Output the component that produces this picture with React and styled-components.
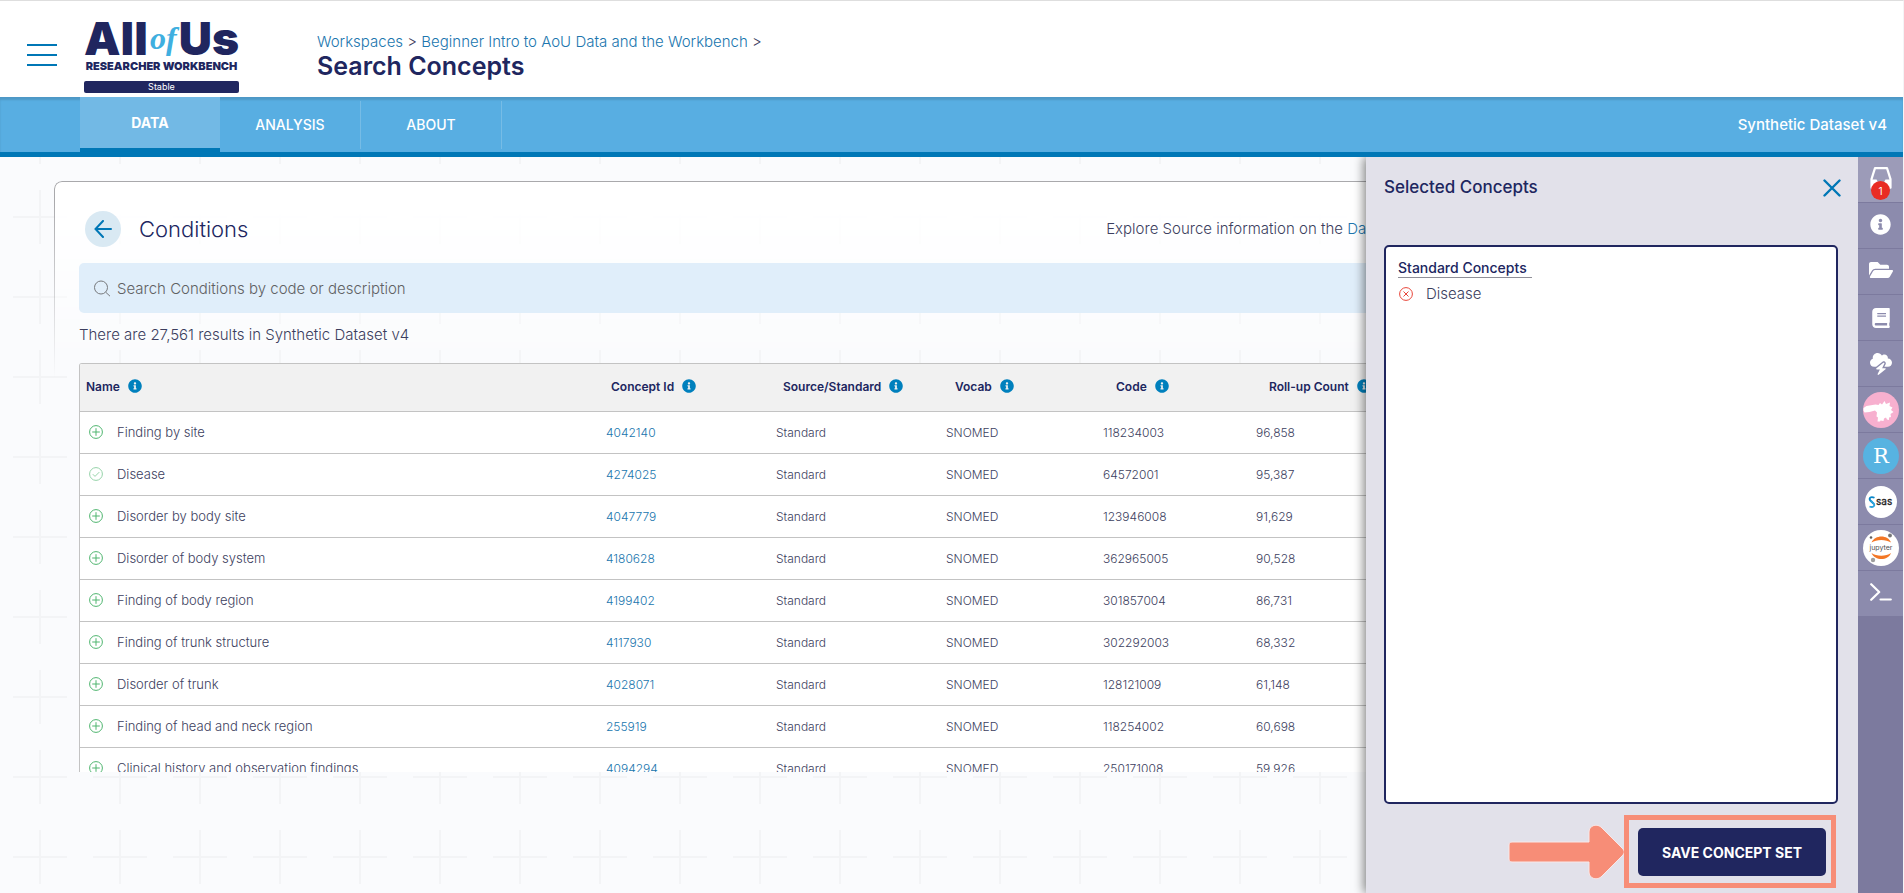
import React from 'react';
import styled, { createGlobalStyle } from 'styled-components';
import { FaBook, FaFolderOpen, FaInfoCircle } from 'react-icons/fa';
import { FaCloudBolt } from 'react-icons/fa6';

const colors = {
  primary: '#20265f',
  accent: '#0077b6',
  secondary: '#58aee2',
  link: '#2076ae',
  text: '#3c3e5e',
  border: '#c3c3c3',
  success: '#4fb56f',
  danger: '#e8463a',
  highlight: '#f78d77'
};

const plusTile = "url(\"data:image/svg+xml,%3Csvg xmlns='http://www.w3.org/2000/svg' width='80' height='80'%3E%3Cpath d='M40 13v54M13 40h54' stroke='%23f3f4f6' stroke-width='2'/%3E%3C/svg%3E\")";

const GlobalStyle = createGlobalStyle`
  * {
    box-sizing: border-box;
  }
  body {
    margin: 0;
    font-family: Inter, 'Open Sans', sans-serif;
    font-size: 15px;
    font-weight: 300;
    color: ${colors.text};
    background: #fff;
  }
  a {
    color: ${colors.link};
    text-decoration: none;
  }
  button {
    font-family: inherit;
    border: none;
    padding: 0;
    background: none;
    cursor: pointer;
  }
`;

const Page = styled.div`
  display: flex;
  flex-direction: column;
  height: 100vh;
  border-top: 1px solid #dedede;
  border-right: 1px solid #f4f4f6;
  overflow: hidden;
`;

const Header = styled.header`
  display: flex;
  flex: none;
  height: 96px;
  background: #fff;
`;

const MenuButton = styled.button`
  display: flex;
  flex-direction: column;
  justify-content: space-between;
  width: 30px;
  height: 22px;
  margin: 43px 27px 0;
`;

const MenuLine = styled.span`
  height: 2px;
  background: ${colors.accent};
`;

const Logo = styled.a`
  display: flex;
  flex-direction: column;
  width: 155px;
  margin-right: 78px;
  color: ${colors.primary};
  white-space: nowrap;
`;

const LogoTitle = styled.span`
  display: flex;
  justify-content: space-between;
  align-items: flex-start;
  height: 57px;
  padding-top: 17px;
  font-size: 46px;
  line-height: 40px;
  font-weight: 900;
`;

const LogoOf = styled.span`
  font-family: 'Liberation Serif', serif;
  font-size: 32px;
  font-style: italic;
  font-weight: 700;
  color: #3fafe0;
`;

const LogoSubtitle = styled.span`
  margin-top: 1px;
  font-size: 11px;
  line-height: 14px;
  font-weight: 900;
  text-align: center;
`;

const Badge = styled.span`
  height: 12px;
  margin-top: 8px;
  border-radius: 2px;
  background: ${colors.primary};
  color: #fff;
  font-size: 9px;
  line-height: 12px;
  font-weight: 400;
  text-align: center;
`;

const Breadcrumbs = styled.nav`
  padding-top: 32px;
  line-height: 18px;
`;

const PageTitle = styled.h1`
  margin: 0;
  font-size: 25px;
  line-height: 30px;
  font-weight: 600;
  color: ${colors.primary};
`;

const TabBar = styled.nav`
  display: flex;
  flex: none;
  align-items: center;
  height: 60px;
  padding: 0 16px 0 80px;
  border-bottom: 5px solid ${colors.accent};
  background: ${colors.secondary};
  box-shadow: inset 0 3px 2px rgba(0, 0, 0, 0.12);
  color: #fff;
  font-weight: 500;
`;

const Tab = styled.a`
  display: flex;
  align-items: center;
  justify-content: center;
  width: ${props => props.$active ? '140px' : '141px'};
  height: ${props => props.$active ? '55px' : '48px'};
  border-bottom: ${props => props.$active ? `4px solid ${colors.accent}` : 'none'};
  border-right: ${props => props.$active ? 'none' : '1px solid #76bce6'};
  background: ${props => props.$active ? '#72b9e5' : 'transparent'};
  font-size: 14px;
  font-weight: ${props => props.$active ? 700 : 500};
  color: #fff;
`;

const Dataset = styled.span`
  margin-left: auto;
`;

const Body = styled.div`
  position: relative;
  display: flex;
  flex: 1;
  min-height: 0;
  background: #fafbfd ${plusTile} 0 20px;
`;

const Main = styled.main`
  position: relative;
  display: flex;
  flex: 1;
  flex-direction: column;
  min-width: 0;
  margin: 24px 14px 121px 54px;
  padding: 0 24px 0 25px;

  &::before {
    content: '';
    position: absolute;
    inset: 0 0 auto;
    height: 196px;
    border: 1px solid #a9a9ac;
    border-bottom: none;
    border-radius: 8px 8px 0 0;
    background: #fff;
    mask-image: linear-gradient(#000 10%, transparent);
  }
`;

const TitleRow = styled.div`
  position: relative;
  display: grid;
  grid-template-columns: 59% 1fr;
  align-items: center;
  flex: none;
  height: 82px;
  padding-top: 13px;
  white-space: nowrap;
`;

const Domain = styled.div`
  display: flex;
  align-items: center;
  gap: 18px;
  padding-left: 6px;
`;

const BackButton = styled.button`
  display: flex;
  align-items: center;
  justify-content: center;
  width: 36px;
  height: 36px;
  border-radius: 50%;
  background: #d9e9f3;
`;

const DomainTitle = styled.h2`
  margin: 0;
  font-size: 22px;
  font-weight: 300;
  color: ${colors.primary};
`;

const SearchBar = styled.label`
  position: relative;
  display: flex;
  align-items: center;
  flex: none;
  gap: 4px;
  height: 50px;
  padding-left: 14px;
  border-radius: 5px;
  background: #e0eefa;
`;

const SearchInput = styled.input`
  flex: 1;
  border: none;
  outline: none;
  background: transparent;
  font: inherit;
  color: ${colors.text};

  &::placeholder {
    color: #5f6163;
    opacity: 1;
  }
`;

const Results = styled.div`
  position: relative;
  flex: none;
  height: 50px;
  padding-top: 13px;
  line-height: 18px;
`;

const TableFrame = styled.div`
  position: relative;
  flex: 1;
  min-height: 0;
  overflow: hidden;
  border: 1px solid ${colors.border};
  border-bottom: none;
  border-radius: 3px 3px 0 0;
`;

const Table = styled.table`
  width: 100%;
  border-collapse: collapse;
  table-layout: fixed;
  background: #fff;
  font-size: 12px;
  white-space: nowrap;
`;

const HeadCell = styled.th`
  height: 47px;
  padding: 0 0 2px ${props => props.$indent}px;
  border-bottom: 1px solid ${colors.border};
  background: #f1f1f1;
  color: ${colors.primary};
  font-weight: 600;
  text-align: left;
`;

const HeadLabel = styled.span`
  display: flex;
  align-items: center;
  gap: 8px;

  svg {
    flex: none;
    color: #0080bd;
  }
`;

const Cell = styled.td`
  height: 42px;
  padding: 0 0 0 7px;
  border-bottom: 1px solid ${colors.border};
`;

const NameCell = styled.div`
  display: flex;
  align-items: center;
  gap: 14px;
  padding-left: 2px;
  font-size: 13px;
`;

const IconButton = styled.button`
  display: flex;
  opacity: ${props => props.disabled ? 0.6 : 1};
`;

const Panel = styled.aside`
  position: absolute;
  top: 0;
  right: 45px;
  bottom: 0;
  display: flex;
  flex-direction: column;
  width: 492px;
  padding: 20px 17px 5px 18px;
  background: #e2e1ea;
  box-shadow: -2px 0 10px rgba(0, 0, 0, 0.5);
  clip-path: inset(0 0 0 -16px);
`;

const PanelHeader = styled.div`
  display: flex;
  justify-content: space-between;
  align-items: flex-start;
  height: 68px;
`;

const PanelTitle = styled.h3`
  margin: 0;
  font-size: 17px;
  line-height: 20px;
  font-weight: 500;
  color: ${colors.primary};
`;

const CloseButton = styled.button`
  display: flex;
  margin-top: 2px;
`;

const ConceptList = styled.section`
  flex: 1;
  min-height: 0;
  margin-right: 3px;
  padding: 12px;
  border: 2px solid ${colors.primary};
  border-radius: 5px;
  background: #fff;
`;

const ConceptGroup = styled.h4`
  width: 134px;
  margin: 0 0 7px;
  border-bottom: 1px solid #8f8f98;
  font-size: 14px;
  line-height: 18px;
  font-weight: 500;
  color: ${colors.primary};
  white-space: nowrap;
`;

const ConceptItem = styled.div`
  display: flex;
  align-items: center;
  gap: 13px;
  padding-left: 1px;
  line-height: 18px;
`;

const PanelFooter = styled.div`
  display: flex;
  align-items: center;
  justify-content: flex-end;
  padding: 11px 5px 0 0;
`;

const Highlight = styled.div`
  padding: 8px 5px 7px 9px;
  border: 5px solid ${colors.highlight};
`;

const SaveButton = styled.button`
  width: 188px;
  height: 48px;
  border-radius: 5px;
  background: ${colors.primary};
  color: #fff;
  font-size: 14px;
  font-weight: 700;
`;

const Sidebar = styled.nav`
  flex: none;
  width: 45px;
  background: #7c7a9e;
`;

const SideItem = styled.button`
  position: relative;
  display: flex;
  align-items: center;
  justify-content: center;
  width: 100%;
  height: 46px;
  padding-bottom: ${props => props.$brand ? 0 : 3}px;
  border-bottom: 1px solid #7c7a9e;
  background: ${props => props.$active ? '#9c9bb8' : '#8c8bad'};
  color: #fff;
`;

const Count = styled.span`
  position: absolute;
  top: 24px;
  left: 13px;
  width: 19px;
  height: 19px;
  border-radius: 50%;
  background: #e92c23;
  font-size: 10px;
  line-height: 20px;
`;

const CircleIcon = ({ kind, color }) => (
  <svg width="14" height="14" viewBox="0 0 14 14" fill="none" stroke={color}>
    <circle cx="7" cy="7" r="6.4" />
    {kind === 'plus' && <path d="M7 3.2v7.6M3.2 7h7.6" />}
    {kind === 'check' && <path d="M3.8 7.2l2.2 2.2 4.3-4.3" />}
    {kind === 'cross' && <path d="M4.5 4.5l5 5M9.5 4.5l-5 5" />}
  </svg>
);

const BackArrow = () => (
  <svg width="18" height="18" viewBox="0 0 18 18" fill="none" stroke={colors.accent} strokeWidth="2" strokeLinecap="round">
    <path d="M17 9H1.5M9 1L1.5 9 9 17" />
  </svg>
);

const SearchIcon = () => (
  <svg width="18" height="18" viewBox="0 0 18 18" fill="none" stroke="#77797c">
    <circle cx="8" cy="8.5" r="6.5" />
    <path d="M12.7 13.2l4.3 4" />
  </svg>
);

const CloseIcon = () => (
  <svg width="18" height="18" viewBox="0 0 18 18" stroke={colors.accent} strokeWidth="2.4" strokeLinecap="round">
    <path d="M1.500 1.500l15 15M16.500 1.500l-15 15" />
  </svg>
);

const TrayIcon = () => (
  <svg width="22" height="22" viewBox="0 0 22 22" fill="none" stroke="#fff" strokeWidth="2.2" strokeLinejoin="round">
    <path d="M5 1.200h12l3.500 11v8.500h-19v-8.500z" />
    <path d="M1.500 12.500h5l2 3.500h5l2-3.500h5v8h-19z" fill="#fff" stroke="none" />
  </svg>
);

const PigIcon = () => (
  <svg width="36" height="36" viewBox="0 0 36 36">
    <circle cx="18" cy="18" r="18" fill="#f7b0cf" />
    <path
      d="M.5 16l3-2 9-1.500 3 .5 1.500-2 2 1.500 2.500-3.500 1.500 3 4-1.500-.5 3.500 3 1.500-1.500 2.500 2.500 2-3 2 .5 3-2 .5 0 2.500-2-.5-1-2-2 1-.5 2.500-3-.5-.5 1-2.500 0 .5-4-1.500-1 .5-4-2-2-5.500 1.500-5 .5-1-2z"
      fill="#fff"
    />
  </svg>
);

const RIcon = () => (
  <svg width="36" height="36" viewBox="0 0 36 36">
    <circle cx="18" cy="18" r="18" fill="#57b3e1" />
    <text x="18" y="25" textAnchor="middle" fill="#fff" fontFamily="'DejaVu Serif', serif" fontSize="21">R</text>
  </svg>
);

const SasIcon = () => (
  <svg width="32" height="32" viewBox="0 0 32 32">
    <circle cx="16" cy="16" r="16" fill="#fff" />
    <path d="M9.500 11.800c-4-2-6 .8-4 3l3.500 3.200" fill="none" stroke="#0a86c8" strokeWidth="1.800" />
    <path d="M4.500 20.500c3.500 1.500 6-.8 4.200-3l-3-3" fill="none" stroke="#2ba3dc" strokeWidth="1.800" />
    <text x="11" y="19" fill="#222" stroke="#222" strokeWidth="0.3" fontFamily="Inter, sans-serif" fontSize="10">sas</text>
  </svg>
);

const JupyterIcon = () => (
  <svg width="36" height="36" viewBox="0 0 36 36">
    <circle cx="18" cy="18" r="18" fill="#fff" />
    <path d="M8.500 12.500C12 4.500 25 4.500 28 12.500 23 9 13.500 9 8.500 12.500zM8.500 23C12 31 25 31 28 23 23 26.500 13.500 26.500 8.500 23z" fill="#f37726" />
    <circle cx="8" cy="7.500" r="1.300" fill="#616161" />
    <circle cx="27" cy="5.500" r="1.900" fill="#767677" />
    <circle cx="10" cy="30" r="2.200" fill="#9e9e9e" />
    <text x="18" y="19.500" textAnchor="middle" fill="#4e4e4e" fontFamily="Inter, sans-serif" fontSize="7">jupyter</text>
  </svg>
);

const TerminalIcon = () => (
  <svg width="22" height="18" viewBox="0 0 22 18" fill="none" stroke="#fff" strokeWidth="2.2" strokeLinecap="round" strokeLinejoin="round">
    <path d="M1.200 1.200l8 7.800-8 7.800M10.500 16.500h10.300" />
  </svg>
);

const Arrow = () => (
  <svg width="116" height="56" viewBox="0 0 116 56">
    <path
      d="M4 18h77V8c0-6 7-9 12-5l21 21c3 3 3 5 0 8L93 53c-5 4-12 1-12-5V38H4c-2 0-3-1-3-3V21c0-2 1-3 3-3z"
      fill={colors.highlight}
      stroke="#f9e8e8"
    />
  </svg>
);

const columns = [
  { label: 'Name', width: 519, indent: 6 },
  { label: 'Concept Id', width: 170, indent: 12 },
  { label: 'Source/Standard', width: 170, indent: 14 },
  { label: 'Vocab', width: 157, indent: 16 },
  { label: 'Code', width: 153, indent: 20 },
  { label: 'Roll-up Count', indent: 20 }
];

const concepts = [
  { name: 'Finding by site', id: '4042140', code: '118234003', count: '96,858' },
  { name: 'Disease', id: '4274025', code: '64572001', count: '95,387' },
  { name: 'Disorder by body site', id: '4047779', code: '123946008', count: '91,629' },
  { name: 'Disorder of body system', id: '4180628', code: '362965005', count: '90,528' },
  { name: 'Finding of body region', id: '4199402', code: '301857004', count: '86,731' },
  { name: 'Finding of trunk structure', id: '4117930', code: '302292003', count: '68,332' },
  { name: 'Disorder of trunk', id: '4028071', code: '128121009', count: '61,148' },
  { name: 'Finding of head and neck region', id: '255919', code: '118254002', count: '60,698' },
  { name: 'Clinical history and observation findings', id: '4094294', code: '250171008', count: '59,926' }
];

const sideItems = [
  { label: 'Selected concepts', icon: <TrayIcon />, active: true },
  { label: 'Help', icon: <FaInfoCircle size={21} /> },
  { label: 'Files', icon: <FaFolderOpen size={24} /> },
  { label: 'Dictionary', icon: <FaBook size={20} />, brand: true },
  { label: 'Environment', icon: <FaCloudBolt size={22} />, brand: true },
  { label: 'Hail', icon: <PigIcon />, brand: true },
  { label: 'RStudio', icon: <RIcon />, brand: true },
  { label: 'SAS', icon: <SasIcon />, brand: true },
  { label: 'Jupyter', icon: <JupyterIcon />, brand: true },
  { label: 'Terminal', icon: <TerminalIcon /> }
];

class App extends React.Component {
  constructor(props) {
    super(props);
    this.state = {
      search: '',
      selected: ['Disease']
    };
  }

  addConcept(name) {
    this.setState({ selected: [...this.state.selected, name] });
  }

  removeConcept(name) {
    this.setState({ selected: this.state.selected.filter(item => item !== name) });
  }

  renderTable() {
    const { selected } = this.state;
    return (
      <Table>
        <colgroup>
          {columns.map(column => <col key={column.label} width={column.width} />)}
        </colgroup>
        <thead>
          <tr>
            {columns.map(column => (
              <HeadCell key={column.label} $indent={column.indent}>
                <HeadLabel>
                  {column.label}
                  <FaInfoCircle size={14} />
                </HeadLabel>
              </HeadCell>
            ))}
          </tr>
        </thead>
        <tbody>
          {concepts.map(concept => {
            const added = selected.includes(concept.name);
            return (
              <tr key={concept.id}>
                <Cell>
                  <NameCell>
                    <IconButton
                      aria-label={`Add ${concept.name}`}
                      disabled={added}
                      onClick={() => this.addConcept(concept.name)}
                    >
                      <CircleIcon kind={added ? 'check' : 'plus'} color={colors.success} />
                    </IconButton>
                    {concept.name}
                  </NameCell>
                </Cell>
                <Cell><a href="#concept">{concept.id}</a></Cell>
                <Cell>Standard</Cell>
                <Cell>SNOMED</Cell>
                <Cell>{concept.code}</Cell>
                <Cell>{concept.count}</Cell>
              </tr>
            );
          })}
        </tbody>
      </Table>
    );
  }

  render() {
    const { search, selected } = this.state;
    return (
      <Page>
        <GlobalStyle />
        <Header>
          <MenuButton aria-label="Menu">
            <MenuLine />
            <MenuLine />
            <MenuLine />
          </MenuButton>
          <Logo href="#home">
            <LogoTitle>All<LogoOf>of</LogoOf>Us</LogoTitle>
            <LogoSubtitle>RESEARCHER WORKBENCH</LogoSubtitle>
            <Badge>Stable</Badge>
          </Logo>
          <div>
            <Breadcrumbs>
              <a href="#workspaces">Workspaces</a>
              {' > '}
              <a href="#workspace">Beginner Intro to AoU Data and the Workbench</a>
              {' >'}
            </Breadcrumbs>
            <PageTitle>Search Concepts</PageTitle>
          </div>
        </Header>
        <TabBar>
          <Tab href="#data" $active>DATA</Tab>
          <Tab href="#analysis">ANALYSIS</Tab>
          <Tab href="#about">ABOUT</Tab>
          <Dataset>Synthetic Dataset v4</Dataset>
        </TabBar>
        <Body>
          <Main>
            <TitleRow>
              <Domain>
                <BackButton aria-label="Back"><BackArrow /></BackButton>
                <DomainTitle>Conditions</DomainTitle>
              </Domain>
              <div>Explore Source information on the <a href="#browser">Data Browser</a></div>
            </TitleRow>
            <SearchBar>
              <SearchIcon />
              <SearchInput
                aria-label="Search Conditions"
                placeholder="Search Conditions by code or description"
                value={search}
                onChange={e => this.setState({ search: e.target.value })}
              />
            </SearchBar>
            <Results>There are 27,561 results in Synthetic Dataset v4</Results>
            <TableFrame>{this.renderTable()}</TableFrame>
          </Main>
          <Panel>
            <PanelHeader>
              <PanelTitle>Selected Concepts</PanelTitle>
              <CloseButton aria-label="Close"><CloseIcon /></CloseButton>
            </PanelHeader>
            <ConceptList>
              <ConceptGroup>Standard Concepts</ConceptGroup>
              {selected.map(name => (
                <ConceptItem key={name}>
                  <IconButton aria-label={`Remove ${name}`} onClick={() => this.removeConcept(name)}>
                    <CircleIcon kind="cross" color={colors.danger} />
                  </IconButton>
                  {name}
                </ConceptItem>
              ))}
            </ConceptList>
            <PanelFooter>
              <Arrow />
              <Highlight>
                <SaveButton>SAVE CONCEPT SET</SaveButton>
              </Highlight>
            </PanelFooter>
          </Panel>
          <Sidebar>
            {sideItems.map(item => (
              <SideItem key={item.label} aria-label={item.label} $active={item.active} $brand={item.brand}>
                {item.icon}
                {item.active && <Count>{selected.length}</Count>}
              </SideItem>
            ))}
          </Sidebar>
        </Body>
      </Page>
    );
  }
}

export default App;
